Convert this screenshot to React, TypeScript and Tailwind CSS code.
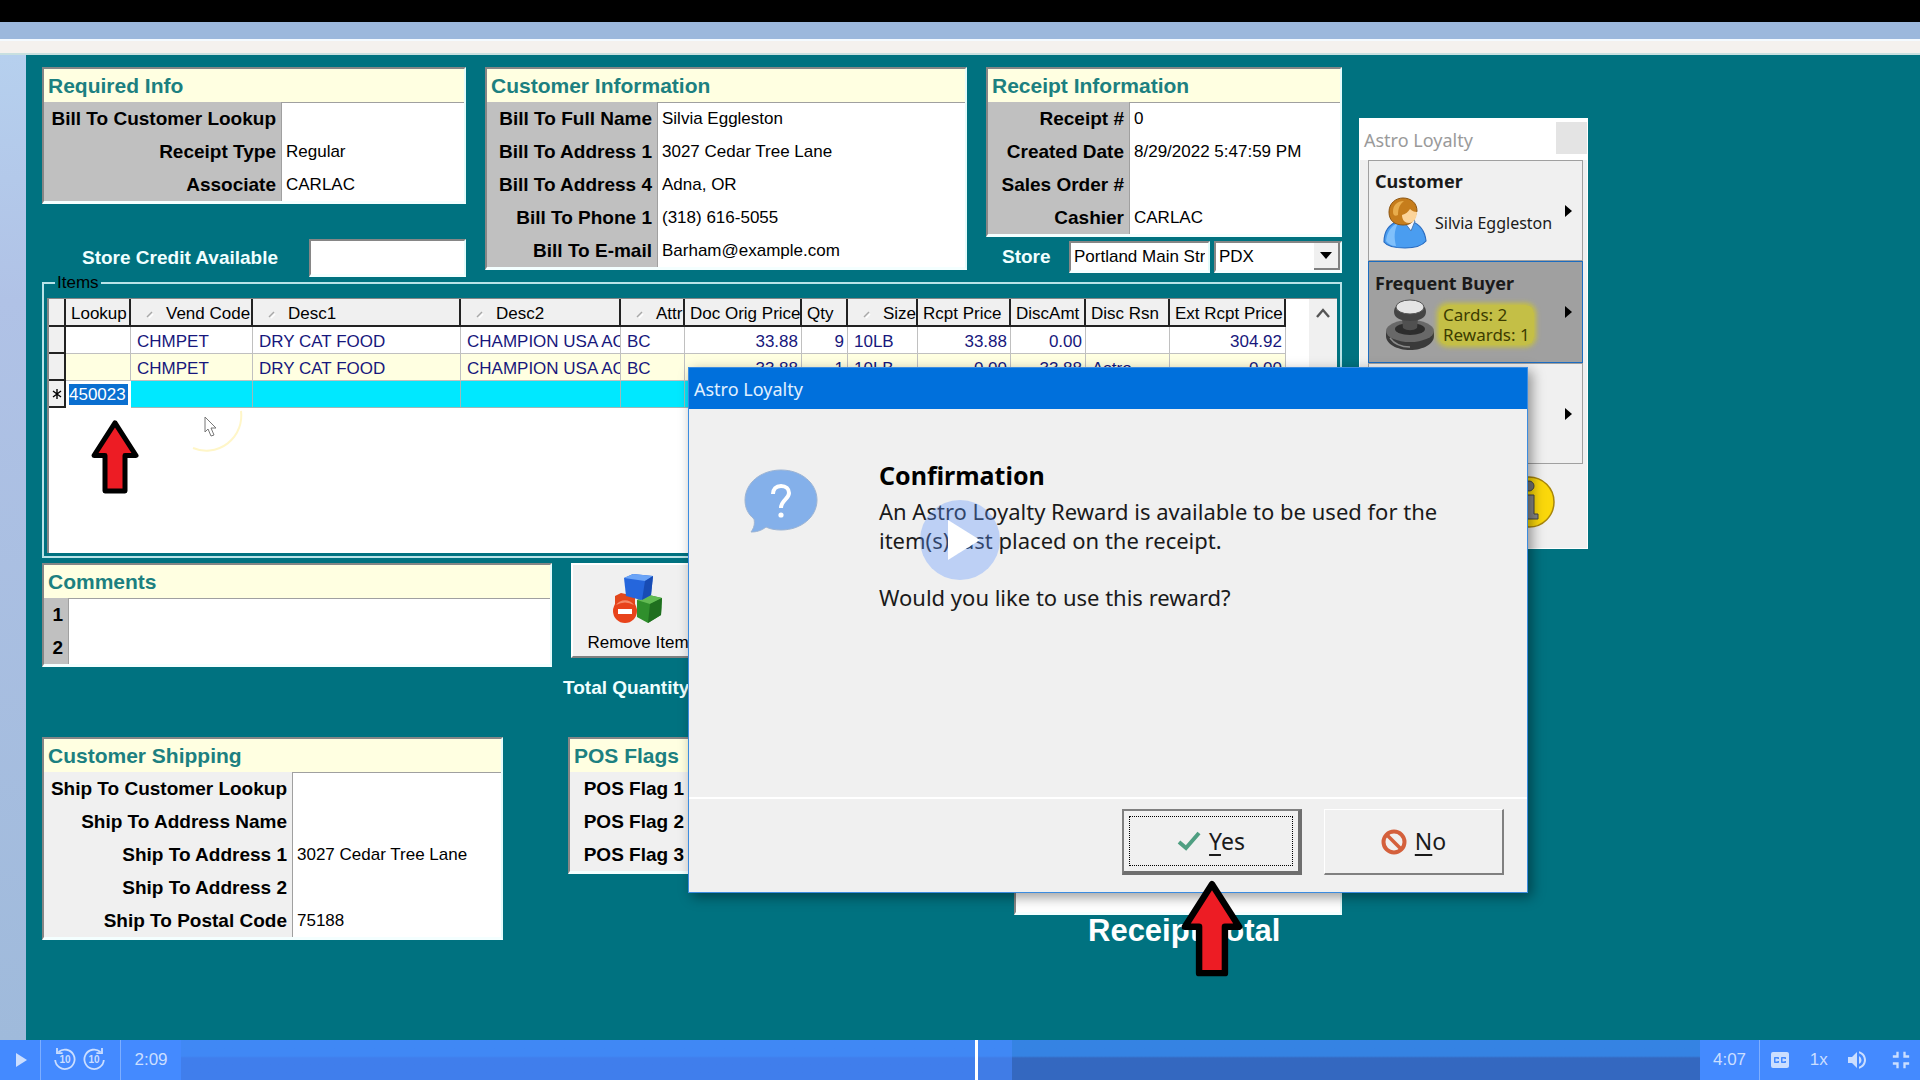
import React from "react";
import clsx from "clsx";
import {
  MdPlayArrow,
  MdClosedCaption,
  MdVolumeUp,
  MdFullscreenExit,
} from "react-icons/md";

type Field = { label: string; value?: string };

const requiredInfo: Field[] = [
  { label: "Bill To Customer Lookup" },
  { label: "Receipt Type", value: "Regular" },
  { label: "Associate", value: "CARLAC" },
];

const customerInfo: Field[] = [
  { label: "Bill To Full Name", value: "Silvia Eggleston" },
  { label: "Bill To Address 1", value: "3027 Cedar Tree Lane" },
  { label: "Bill To Address 4", value: "Adna, OR" },
  { label: "Bill To Phone 1", value: "(318) 616-5055" },
  { label: "Bill To E-mail", value: "Barham@example.com" },
];

const receiptInfo: Field[] = [
  { label: "Receipt #", value: "0" },
  { label: "Created Date", value: "8/29/2022 5:47:59 PM" },
  { label: "Sales Order #" },
  { label: "Cashier", value: "CARLAC" },
];

const shipping: Field[] = [
  { label: "Ship To Customer Lookup" },
  { label: "Ship To Address Name" },
  { label: "Ship To Address 1", value: "3027 Cedar Tree Lane" },
  { label: "Ship To Address 2" },
  { label: "Ship To Postal Code", value: "75188" },
];

const comments: Field[] = [{ label: "1" }, { label: "2" }];

const posFlags: Field[] = [
  { label: "POS Flag 1" },
  { label: "POS Flag 2" },
  { label: "POS Flag 3" },
];

const columns = [
  { title: "Lookup", width: "w-[65px]" },
  { title: "Vend Code", width: "w-[122px]", sort: true },
  { title: "Desc1", width: "w-[208px]", sort: true },
  { title: "Desc2", width: "w-[160px]", sort: true },
  { title: "Attr", width: "w-[64px]", sort: true },
  { title: "Doc Orig Price", width: "w-[117px]", right: true },
  { title: "Qty", width: "w-[46px]", right: true },
  { title: "Size", width: "w-[70px]", sort: true },
  { title: "Rcpt Price", width: "w-[93px]", right: true },
  { title: "DiscAmt", width: "w-[75px]", right: true },
  { title: "Disc Rsn", width: "w-[84px]" },
  { title: "Ext Rcpt Price", width: "w-[116px]", right: true },
];

const rows = [
  ["", "CHMPET", "DRY CAT FOOD", "CHAMPION USA AC", "BC", "33.88", "9", "10LB", "33.88", "0.00", "", "304.92"],
  ["", "CHMPET", "DRY CAT FOOD", "CHAMPION USA AC", "BC", "33.88", "1", "10LB", "0.00", "33.88", "Astro", "0.00"],
];

const sunken =
  "border-t-2 border-l-2 border-r-2 border-b-[3px] border-t-[#868686] border-l-[#868686] border-r-[#e4fbfb] border-b-[#f4ffff]";

function Panel({
  title,
  fields,
  labelWidth,
  labelBg = "bg-[#c0c0c0]",
  className,
}: {
  title: string;
  fields: Field[];
  labelWidth: string;
  labelBg?: string;
  className?: string;
}) {
  const slug = title.toLowerCase().replace(/ /g, "-");
  return (
    <section className={clsx("bg-white", sunken, className)}>
      <h2 className="h-[33px] overflow-hidden bg-[#ffffe1] pl-1 text-[21px] leading-[34px] font-bold whitespace-nowrap text-[#1c8080]">
        {title}
      </h2>
      {fields.map((field, index) => (
        <div key={field.label} className="flex h-[33px]">
          <label
            htmlFor={`${slug}-${index}`}
            className={clsx(
              "shrink-0 pr-[5px] text-right text-[19px] leading-[33px] font-bold whitespace-nowrap",
              labelWidth,
              labelBg
            )}
          >
            {field.label}
          </label>
          <input
            id={`${slug}-${index}`}
            defaultValue={field.value}
            className={clsx(
              "w-full min-w-0 flex-1 border-l border-[#a0a0a0] pl-1 text-[17px] outline-none",
              index === 0 && "border-t"
            )}
          />
        </div>
      ))}
    </section>
  );
}

function SortMark() {
  return (
    <svg viewBox="0 0 8 8" className="mr-3 ml-[10px] inline h-2 w-2">
      <path d="M1 6 6 1" stroke="#a8a8a8" strokeWidth="1.5" />
      <path d="M3 7 7 3" stroke="#fff" strokeWidth="1.5" />
    </svg>
  );
}

function ItemsGrid() {
  return (
    <fieldset className="-mt-1 min-w-0 border-2 border-[#b9e3e8] px-[3px] pt-[5px] pb-[3px]">
      <legend className="ml-2 h-5 px-[2px] text-[17px] leading-5">Items</legend>
      <div className="flex h-[255px] justify-between overflow-hidden border-t border-l-2 border-[#868686] bg-white">
        <table className="w-[1237px] table-fixed border-separate border-spacing-0 self-start text-[17px]">
          <thead>
            <tr className="h-7 bg-[#f0f0f0] text-left">
              <th className="w-[17px] border-r-2 border-b-2 border-[#222]" />
              {columns.map((col) => (
                <th
                  key={col.title}
                  className={clsx(
                    "overflow-hidden border-r-2 border-b-2 border-[#222] pt-1 pl-[5px] leading-[22px] font-normal whitespace-nowrap",
                    col.width
                  )}
                >
                  {col.sort && <SortMark />}
                  {col.title}
                </th>
              ))}
            </tr>
          </thead>
          <tbody className="leading-[22px] text-[#17177c]">
            {rows.map((row, r) => (
              <tr key={r} className={clsx("h-[27px]", r === 1 && "bg-[#ffffe1]")}>
                <th className="border-r-2 border-b-2 border-[#222] bg-[#f0f0f0]" />
                {row.map((cell, c) => (
                  <td
                    key={c}
                    className={clsx(
                      "overflow-hidden border-r border-b border-[#c0c0c0] pt-1 whitespace-nowrap",
                      columns[c].right ? "pr-[3px] text-right" : "pl-[6px]"
                    )}
                  >
                    {cell}
                  </td>
                ))}
              </tr>
            ))}
            <tr className="h-[27px] bg-[#00e8ff]">
              <th className="border-r-2 border-b-2 border-[#222] bg-[#f0f0f0]">
                <svg viewBox="0 0 10 10" className="mx-auto h-[10px] w-[10px]">
                  <path d="M5 0v10M1 2l8 6M9 2 1 8" stroke="#000" strokeWidth="1.4" />
                </svg>
              </th>
              <td className="bg-white px-[3px]">
                <input
                  aria-label="Lookup"
                  defaultValue="450023"
                  className="block h-[21px] w-full bg-[#0a6fd0] text-[17px] text-white outline-none"
                />
              </td>
              {columns.slice(1).map((col) => (
                <td key={col.title} className="border-r border-b border-[#9fb8b8]" />
              ))}
            </tr>
          </tbody>
        </table>
        <div className="flex w-7 justify-center bg-[#f0f0f0] pt-[9px]">
          <svg viewBox="0 0 14 10" className="h-[10px] w-[14px]">
            <path d="M1 9 7 2l6 7" fill="none" stroke="#555" strokeWidth="2.4" />
          </svg>
        </div>
      </div>
    </fieldset>
  );
}

function CubesIcon() {
  return (
    <svg viewBox="0 0 50 50" className="h-[50px] w-[50px]">
      <path d="M2 22 8 19l14 3v16l-9 4-11-5z" fill="#e2471c" />
      <path d="m24 26 12-5 13 3-1 17-13 8-11-6z" fill="#2f8f2c" />
      <path d="m24 26 12-5 13 3-12 6z" fill="#62bb53" />
      <path d="m37 30 12-6-1 17-13 8z" fill="#1f6f1f" />
      <path d="m11 4 9-4 20 2-2 19-10 5-15-4z" fill="#2566dc" />
      <path d="m11 4 9-4 20 2-8 5z" fill="#6ba4f7" />
      <path d="m32 7 8-5-2 19-9 5z" fill="#184cb4" />
      <circle cx="12" cy="37" r="12" fill="#e8431b" />
      <path d="M3 31a11 11 0 0 1 18 0q-9-5-18 0" fill="#f58a68" />
      <rect x="5" y="35" width="14" height="5" fill="#fff" />
    </svg>
  );
}

function PersonIcon() {
  return (
    <svg viewBox="0 0 44 52" className="h-[52px] w-11 shrink-0">
      <path
        d="M1 45c0-11 5-18 15-21h12c8 3 14 10 15 20-4 5-12 7-21 7S4 49 1 45z"
        fill="#4a9df0"
        stroke="#2a6cc0"
        strokeWidth="1.2"
      />
      <path d="M3 44c1-9 5-15 12-18-4 8-4 14-2 23-4 0-8-2-10-5z" fill="#80c0fb" />
      <path d="m22 26 6 8 4-10-4-2z" fill="#f4f7ff" stroke="#4a7ab4" />
      <path
        d="M6 15C6 6 13 1 20 1c8 0 14 5 14 13l-3 9c-3 4-7 5-11 5C12 28 6 24 6 15z"
        fill="#c67d1c"
        stroke="#8c5410"
      />
      <path d="M19 18c4-1 6-3 8-6 2 2 4 3 7 3 0 6-3 11-8 11-4 0-7-3-7-8z" fill="#fcd49a" />
      <path d="M10 15c0-7 4-11 11-11-4 3-6 7-6 14-3 2-5 0-5-3z" fill="#e8ad4c" />
    </svg>
  );
}

function StampIcon() {
  return (
    <svg viewBox="0 0 50 52" className="h-[52px] w-[50px] shrink-0">
      <path d="M1 32v5c0 8 11 14 24 14s24-6 24-14v-5z" fill="#3a3a3a" />
      <ellipse cx="25" cy="32" rx="24" ry="11" fill="#686868" />
      <ellipse cx="25" cy="30" rx="15" ry="6" fill="#2d2d2d" />
      <path d="M17 20h16l-1 9c-4 3-10 3-14 0z" fill="#505050" />
      <path d="M9 13c0-3 1-5 2-5h28c1 0 2 2 2 5 0 6-7 9-16 9S9 19 9 13z" fill="#444" />
      <ellipse cx="25" cy="8" rx="14" ry="7" fill="#e4e4e4" stroke="#555" />
      <path d="M5 39c5 7 13 9 20 9" fill="none" stroke="#8a8a8a" strokeWidth="1.5" />
    </svg>
  );
}

function RightCaret() {
  return (
    <svg viewBox="0 0 7 12" className="h-3 w-[7px] shrink-0">
      <path d="M0 0v12l7-6z" />
    </svg>
  );
}

function LoyaltyWindow() {
  return (
    <aside className="absolute top-[63px] left-[1333px] flex h-[431px] w-[229px] flex-col border border-white bg-[#f0f0f0] font-['Noto_Sans',sans-serif] text-[#1a1a1a]">
      <div className="flex h-[41px] items-center justify-between bg-white pl-1">
        <span className="text-lg leading-8 text-[#9a9a9a]">Astro Loyalty</span>
        <button aria-label="Close" className="mb-1 h-8 w-[31px] bg-[#e4e4e4]" />
      </div>
      <div className="mr-1 ml-2">
        <button className="flex h-[101px] w-full items-center border border-[#a0a0a0] pr-[10px] pl-[6px] text-left">
          <span className="flex-1 pb-[7px]">
            <span className="block text-lg leading-8 font-bold">Customer</span>
            <span className="flex items-center gap-2 pl-2">
              <PersonIcon />
              <span className="text-base whitespace-nowrap">Silvia Eggleston</span>
            </span>
          </span>
          <span className="-ml-3">
            <RightCaret />
          </span>
        </button>
        <button className="flex h-[102px] w-full items-center border border-[#1c6cc0] bg-[#a0a0a0] pr-[10px] pl-[6px] text-left">
          <span className="flex-1 pb-[7px]">
            <span className="block text-lg leading-8 font-bold">Frequent Buyer</span>
            <span className="flex items-center gap-1 pl-[10px]">
              <StampIcon />
              <span className="rounded-lg bg-[#c8c23c]/90 px-1 text-[17px] leading-5 whitespace-nowrap text-[#3c3c00] shadow-[0_0_5px_2px_#c8c23c]">
                Cards: 2
                <br />
                Rewards: 1
              </span>
            </span>
          </span>
          <RightCaret />
        </button>
        <button
          aria-label="More programs"
          className="flex h-[101px] w-full items-center justify-end border border-[#a0a0a0] pr-[10px]"
        >
          <RightCaret />
        </button>
      </div>
      <div className="flex justify-end pt-3 pr-8">
        <svg viewBox="0 0 52 52" className="h-[52px] w-[52px]">
          <circle cx="26" cy="26" r="25" fill="#fbd80b" stroke="#a8860a" strokeWidth="1.5" />
          <circle cx="26" cy="10" r="5" fill="#777" stroke="#444" />
          <path d="M19 19h12v19h4v5H18v-5h4V24h-3z" fill="#888" stroke="#444" />
        </svg>
      </div>
    </aside>
  );
}

function ConfirmDialog() {
  return (
    <div
      role="dialog"
      aria-label="Astro Loyalty"
      className="absolute top-[312px] left-[662px] flex h-[526px] w-[840px] flex-col border border-[#3c8ce0] bg-[#f0f0f0] font-['Noto_Sans',sans-serif] text-[#1a1a1a] shadow-[4px_4px_12px_rgba(0,0,0,0.4)]"
    >
      <div className="h-[41px] bg-[#0070dc] pl-[5px] text-lg leading-[42px] text-[#e0f0ff]">Astro Loyalty</div>
      <div className="flex flex-1 items-start pt-12 pl-[55px]">
        <svg viewBox="0 0 74 64" className="mt-3 h-16 w-[74px] shrink-0">
          <path
            d="M37 1c20 0 36 13 36 30S57 61 37 61c-6 0-11-1-15-3-5 4-10 5-15 5 3-4 4-8 3-13C4 45 1 39 1 31 1 14 17 1 37 1z"
            fill="#84b0ea"
            stroke="#9cb4d4"
          />
          <path
            d="M29 25c0-5 3-8 8-8s8 3 8 7c0 6-8 7-8 15"
            fill="none"
            stroke="#fff"
            strokeWidth="4"
          />
          <circle cx="37" cy="46" r="2.6" fill="#fff" />
        </svg>
        <div className="pl-[61px] text-[22px] leading-[29px]">
          <h1 className="pb-1 text-[25px] leading-9 font-bold text-black">Confirmation</h1>
          <p>
            An Astro Loyalty Reward is available to be used for the
            <br />
            item(s) just placed on the receipt.
          </p>
          <p className="pt-7">Would you like to use this reward?</p>
        </div>
      </div>
      <div className="flex h-[95px] justify-end gap-[22px] border-t-2 border-white pt-[10px] pr-[23px] text-[23px]">
        <button className="h-[66px] w-[180px] border-t-2 border-r-4 border-b-4 border-l-2 border-[#6e6e6e] border-t-[#808080] border-l-[#808080] p-[5px]">
          <span className="flex h-full items-center justify-center gap-2 border border-dotted border-black">
            <svg viewBox="0 0 24 20" className="h-5 w-6">
              <path d="m2 11 7 6L22 2" fill="none" stroke="#4f9f82" strokeWidth="4" />
            </svg>
            <span>
              <u className="underline-offset-4">Y</u>es
            </span>
          </span>
        </button>
        <button className="flex h-[66px] w-[180px] items-center justify-center gap-2 border-t border-r-2 border-b-2 border-l border-[#808080] border-t-white border-l-white">
          <svg viewBox="0 0 26 26" className="h-[26px] w-[26px]">
            <circle cx="13" cy="13" r="10.5" fill="none" stroke="#d4603c" strokeWidth="4" />
            <path d="m6 6 14 14" stroke="#d4603c" strokeWidth="3.6" />
          </svg>
          <span>
            <u className="underline-offset-4">N</u>o
          </span>
        </button>
      </div>
    </div>
  );
}

function RedArrow({ className }: { className: string }) {
  return (
    <svg viewBox="0 0 48 76" preserveAspectRatio="none" className={clsx("absolute", className)}>
      <path
        d="M24 4 45 37H34V73H14V37H3z"
        fill="#ed1c24"
        stroke="#000"
        strokeWidth="5"
        strokeLinejoin="round"
      />
    </svg>
  );
}

function SkipIcon({ forward }: { forward?: boolean }) {
  return (
    <svg viewBox="0 0 22 24" className="h-6 w-[22px]" fill="none" stroke="currentColor" strokeWidth="1.8">
      <g transform={forward ? "matrix(-1 0 0 1 22 0)" : undefined}>
        <path d="M4.5 5A9.7 9.7 0 1 1 1.2 13" />
        <path d="M3 1v5.2h5.6" />
      </g>
      <text
        x="11"
        y="16"
        textAnchor="middle"
        fontSize="10"
        fontWeight="700"
        fill="currentColor"
        stroke="none"
      >
        10
      </text>
    </svg>
  );
}

function PlayerBar() {
  return (
    <footer className="flex h-10 items-stretch bg-[#448aff] text-[17px] text-[#cbdeff]">
      <button aria-label="Play" className="flex w-[41px] items-center justify-center border-r border-[#7daeff]">
        <MdPlayArrow className="h-6 w-6" />
      </button>
      <div className="flex w-20 items-center justify-center gap-[7px] border-r border-[#7daeff] pr-[2px] pb-[2px]">
        <button aria-label="Back 10 seconds">
          <SkipIcon />
        </button>
        <button aria-label="Forward 10 seconds">
          <SkipIcon forward />
        </button>
      </div>
      <span className="w-[60px] text-center leading-10">2:09</span>
      <div className="flex flex-1 bg-linear-to-b from-[#3583e3] from-40% to-[#3468c0] to-45%">
        <div className="w-[52.3%] bg-linear-to-b from-[#4088f5] from-40% to-[#407eec] to-45%" />
        <div className="w-[3px] bg-white" />
        <div className="w-[34px] bg-linear-to-b from-[#4088f5] from-40% to-[#407ce6] to-45%" />
      </div>
      <span className="w-[60px] border-r border-[#7daeff] text-center leading-10">4:07</span>
      <div className="flex w-40 items-center justify-between pr-[5px] pl-2">
        <button aria-label="Captions">
          <MdClosedCaption className="h-6 w-6" />
        </button>
        <button>1x</button>
        <button aria-label="Mute">
          <MdVolumeUp className="h-6 w-6" />
        </button>
        <button aria-label="Exit full screen">
          <MdFullscreenExit className="h-7 w-7" />
        </button>
      </div>
    </footer>
  );
}

export default function App() {
  return (
    <div className="relative flex min-h-screen flex-col bg-black pt-[22px] font-['Liberation_Sans',Arial,sans-serif] text-black">
      <div className="h-[17px] bg-[#9cb8dc]" />
      <div className="h-4 border-y-2 border-t-[#f4faff] border-b-[#c8e0e0] bg-[#f4f1ee]" />
      <div className="flex flex-1">
        <div className="w-[26px] bg-linear-to-b from-[#b6d0ee] via-[#b0c2e6] via-25% to-[#9fbadb]" />
        <main className="relative flex-1 bg-[#007280] pt-3 pl-4">
          <div className="w-full max-w-[1300px]">
            <div className="grid grid-cols-[minmax(0,424fr)_minmax(0,482fr)_minmax(0,356fr)] items-start gap-x-[19px]">
              <div>
                <Panel title="Required Info" fields={requiredInfo} labelWidth="w-[237px]" />
                <div className="mt-[35px] flex items-center justify-between pl-10">
                  <label htmlFor="store-credit" className="text-[19px] font-bold text-[#f0ffff]">
                    Store Credit Available
                  </label>
                  <input id="store-credit" className={clsx("h-[38px] w-[157px] bg-white px-1 text-[17px]", sunken)} />
                </div>
              </div>
              <Panel title="Customer Information" fields={customerInfo} labelWidth="w-[170px]" />
              <div>
                <Panel title="Receipt Information" fields={receiptInfo} labelWidth="w-[141px]" />
                <div className="mt-1 flex h-8 gap-1 pl-4 text-[17px]">
                  <label htmlFor="store" className="flex-1 text-[19px] leading-8 font-bold text-[#f0ffff]">
                    Store
                  </label>
                  <input
                    id="store"
                    defaultValue="Portland Main Street"
                    className={clsx("w-[141px] bg-white px-[3px] outline-none", sunken)}
                  />
                  <div className={clsx("relative w-32 bg-white", sunken)}>
                    <select aria-label="Store code" className="h-full w-full appearance-none pl-[3px] outline-none">
                      <option>PDX</option>
                    </select>
                    <span className="pointer-events-none absolute inset-y-0 right-0 flex w-[26px] items-center justify-center border-r-2 border-b-2 border-[#808080] bg-[#f0f0f0]">
                      <svg viewBox="0 0 12 7" className="h-[7px] w-3">
                        <path d="M0 0h12L6 7z" />
                      </svg>
                    </span>
                  </div>
                </div>
              </div>
            </div>

            <ItemsGrid />

            <div className="mt-[5px] flex items-start">
              <div className="w-[521px]">
                <Panel title="Comments" fields={comments} labelWidth="w-6" className="w-[510px]" />
                <Panel
                  title="Customer Shipping"
                  fields={shipping}
                  labelWidth="w-[248px]"
                  labelBg="bg-[#f0f0f0]"
                  className="mt-[70px] w-[461px]"
                />
              </div>
              <div>
                <button className="ml-2 flex h-[95px] w-[134px] flex-col items-center border-2 border-t-white border-r-[#808080] border-b-[#808080] border-l-white bg-[#f0f0f0] pt-[9px] text-[17px]">
                  <CubesIcon />
                  <span className="pt-[6px]">Remove Item</span>
                </button>
                <p className="pt-4 text-[19px] leading-7 font-bold text-[#f0ffff]">Total Quantity</p>
                <Panel
                  title="POS Flags"
                  fields={posFlags}
                  labelWidth="w-[119px]"
                  labelBg="bg-[#f0f0f0]"
                  className="mt-[35px] ml-[5px] w-[260px]"
                />
              </div>
              <div className="ml-auto w-[328px]">
                <div className={clsx("h-[352px] bg-white", sunken)} />
                <p className="pl-[74px] text-[31px] leading-8 font-bold text-white">Receipt Total</p>
              </div>
            </div>
          </div>

          <LoyaltyWindow />
          <ConfirmDialog />

          {/* Pointer with its fading click ring */}
          <svg viewBox="0 0 80 80" className="absolute top-[322px] left-[141px] h-20 w-20">
            <path d="M74 34A35 35 0 0 1 26 71" fill="none" stroke="#fff6c8" strokeWidth="2" />
            <path
              d="M38 40v15l3-3 3 7 3-1-3-7h5z"
              fill="#fff"
              stroke="#777"
            />
          </svg>
          <RedArrow className="top-[364px] left-[65px] h-[75px] w-12" />
          <RedArrow className="top-[824px] left-[1155px] h-[98px] w-[62px]" />
        </main>
      </div>
      <PlayerBar />
      <button
        aria-label="Play video"
        className="absolute top-1/2 left-1/2 flex h-20 w-20 -translate-1/2 items-center justify-center rounded-full bg-[#5f94ff]/35 pl-2"
      >
        <svg viewBox="0 0 32 40" className="h-10 w-8">
          <path d="M0 0v40l32-20z" fill="#fff" />
        </svg>
      </button>
    </div>
  );
}
